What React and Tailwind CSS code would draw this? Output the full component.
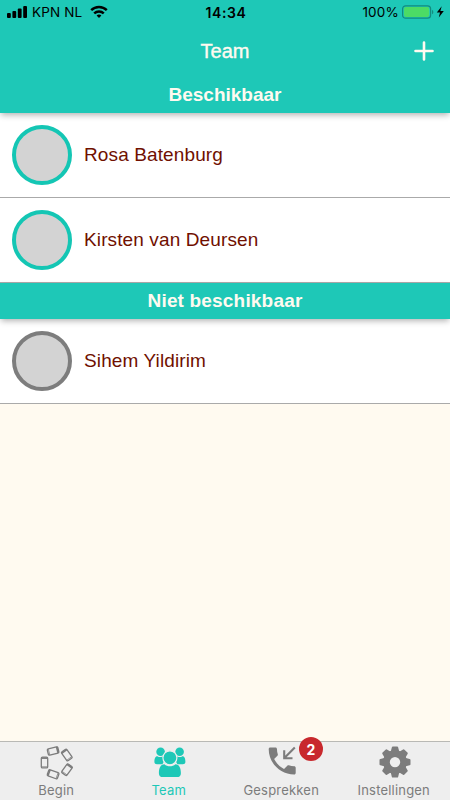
import { clsx } from 'clsx';

const available = ['Rosa Batenburg', 'Kirsten van Deursen'];
const unavailable = ['Sihem Yildirim'];

// x, y and rotation of every phone in the ring
const phones = [
  { x: 33.1, y: 9, angle: 76 },
  { x: 46.8, y: 13, angle: -36 },
  { x: 47, y: 27.7, angle: 36 },
  { x: 33.1, y: 32.3, angle: -70 },
  { x: 24.5, y: 20.5, angle: 0 },
];

function StatusBar() {
  return (
    <div className="flex h-6 items-center justify-between pl-[7px] pr-[5px] font-['Inter',sans-serif] text-[13.5px] text-black">
      <div className="flex flex-1 items-center">
        <svg width="21" height="14" viewBox="0 0 21 14">
          <rect x="0" y="8" width="3.8" height="5" rx="1" />
          <rect x="5.4" y="6" width="3.8" height="7" rx="1" />
          <rect x="10.8" y="3.5" width="3.8" height="9.5" rx="1" />
          <rect x="16.2" y="1" width="3.8" height="12" rx="1" />
        </svg>
        <span className="ml-[4px] w-[52px] whitespace-nowrap tracking-[0.15px]">KPN NL</span>
        <svg className="ml-[6px]" width="18" height="14" viewBox="0 0 18 14" fill="none" stroke="black" strokeWidth="2.4">
          <path d="M1.2 5.2C5.5 .9 12.5 .9 16.8 5.2" />
          <path d="M4.2 8.4C6.9 5.8 11.1 5.8 13.8 8.4" />
          <path d="M6.6 10.5C8 9.3 10 9.3 11.4 10.5L9 13Z" fill="black" stroke="none" />
        </svg>
      </div>
      <span className="text-[14px] font-semibold tracking-[0.6px]">14:34</span>
      <div className="flex flex-1 items-center justify-end">
        <span className="tracking-[0.2px]">100%</span>
        <svg className="ml-[3px]" width="43" height="14" viewBox="0 0 43 14">
          <rect x="0.6" y="0.8" width="28" height="12.4" rx="3" fill="none" stroke="#138b7e" strokeWidth="1.2" />
          <rect x="2" y="2.1" width="25.2" height="9.8" rx="1.8" fill="#4cdb65" />
          <path d="M30 4.7C31.8 5.5 31.8 8.5 30 9.3Z" fill="#138b7e" />
          <path d="M39.7 1.2L34.8 7.6H38L36.8 12.6L41.8 6.1H38.4Z" />
        </svg>
      </div>
    </div>
  );
}

function SectionHeader({ title, className }) {
  return (
    <h2
      className={clsx(
        'relative z-10 flex items-center justify-center bg-[#1ec8b7] text-[19px] font-bold text-[#fffaf0] shadow-[0_3px_6px_-1px_rgba(0,0,0,0.3)]',
        className
      )}
    >
      {title}
    </h2>
  );
}

function Member({ name, online }) {
  return (
    <li className="flex h-[85px] items-center gap-3 border-b border-[#aaa] bg-white px-3">
      <div className={clsx('size-[60px] rounded-full border-4 bg-[#d3d3d3]', online ? 'border-[#14c6b4]' : 'border-[#7d7d7d]')} />
      <span className="text-[19px] tracking-[0.12px] text-[#701000]">{name}</span>
    </li>
  );
}

function PhonesIcon() {
  return (
    <svg width="72" height="42" viewBox="0 0 72 42" fill="none" stroke="currentColor">
      {phones.map((p) => (
        <g key={p.angle} transform={`translate(${p.x} ${p.y}) rotate(${p.angle})`}>
          <rect x="-3.2" y="-5.4" width="6.4" height="10.8" rx="1.2" strokeWidth="1.3" />
          <path d="M-3.2 -4.4H3.2" strokeWidth="1.7" />
          <path d="M-3 4.2H3" strokeWidth="0.7" />
        </g>
      ))}
    </svg>
  );
}

function TeamIcon() {
  return (
    <svg width="72" height="42" viewBox="0 0 72 42" fill="currentColor">
      <g transform="translate(0.4 0.2)">
        <circle cx="27.2" cy="9.6" r="4.3" />
        <circle cx="46.2" cy="9.6" r="4.3" />
        <path d="M24 14C21.7 14 21 16.5 21 19.5C21 21.3 22 22 23.5 22H29L33 15L29 14.2C27.5 15.2 25.5 15 24 14Z" />
        <path d="M49 14C51.3 14 52 16.5 52 19.5C52 21.3 51 22 49.5 22H44L40 15L44 14.2C45.5 15.2 47.5 15 49 14Z" />
        <circle cx="36.5" cy="15.6" r="7" stroke="#eee" strokeWidth="1.2" />
        <path d="M31 22C34 24.8 39 24.8 42 22C46 22 47.5 26 47.5 31C47.5 33.5 46 34.9 43.5 34.9H29.5C27 34.9 25.5 33.5 25.5 31C25.5 26 27 22 31 22Z" />
      </g>
    </svg>
  );
}

function CallIcon() {
  return (
    <svg width="72" height="42" viewBox="0 0 72 42">
      <path
        transform="translate(19.2 0.9) scale(1.5)"
        fill="currentColor"
        d="M20 15.5c-1.25 0-2.45-.2-3.57-.57-.35-.11-.74-.03-1.02.24l-2.2 2.2c-2.83-1.44-5.15-3.75-6.59-6.58l2.2-2.21c.28-.27.36-.66.25-1.01C8.7 6.45 8.5 5.25 8.5 4c0-.55-.45-1-1-1H4c-.55 0-1 .45-1 1 0 9.39 7.61 17 17 17 .55 0 1-.45 1-1v-3.5c0-.55-.45-1-1-1z"
      />
      <path d="M49.8 5.6L39.4 16M39.2 8.2V16.2H47.5" fill="none" stroke="currentColor" strokeWidth="2.1" />
    </svg>
  );
}

function GearIcon() {
  return (
    <svg width="72" height="42" viewBox="0 0 72 42" fill="currentColor">
      <g transform="translate(37 20.1)">
        {[0, 45, 90, 135, 180, 225, 270, 315].map((a) => (
          <path key={a} transform={`rotate(${a})`} d="M-4.6 -9L-3.2 -14.6Q-3 -15.5 -2.1 -15.5H2.1Q3 -15.5 3.2 -14.6L4.6 -9Z" />
        ))}
        <path fillRule="evenodd" d="M-11.9 0A11.9 11.9 0 1 0 11.9 0A11.9 11.9 0 1 0 -11.9 0ZM-5.2 0A5.2 5.2 0 1 1 5.2 0A5.2 5.2 0 1 1 -5.2 0Z" />
      </g>
    </svg>
  );
}

const tabs = [
  { label: 'Begin', Icon: PhonesIcon },
  { label: 'Team', Icon: TeamIcon, active: true },
  { label: 'Gesprekken', Icon: CallIcon, badge: 2 },
  { label: 'Instellingen', Icon: GearIcon },
];

function TabBar() {
  return (
    <nav className="grid h-[59px] grid-cols-4 border-t border-[#b9b9b5] bg-[#eee] font-['Inter',sans-serif] text-[13px]">
      {tabs.map(({ label, Icon, active, badge }) => (
        <div key={label} className={clsx('relative flex flex-col items-center', active ? 'text-[#1ec8b7]' : 'text-[#7c7c7c]')}>
          <div className="h-[38px]">
            <Icon />
          </div>
          <span className="leading-[20px] tracking-[0.2px]">{label}</span>
          {badge && (
            <span className="absolute -top-[5px] left-[74px] flex size-6 items-center justify-center rounded-full bg-[#c8282d] text-[14px] font-bold text-white">
              {badge}
            </span>
          )}
        </div>
      ))}
    </nav>
  );
}

export default function App() {
  return (
    <div className="flex h-[800px] w-[450px] flex-col overflow-hidden bg-[#fffaf0] font-['Liberation_Sans',Arial,sans-serif]">
      <header className="relative z-20 bg-[#1ec8b7]">
        <StatusBar />
        <div className="grid h-[54px] grid-cols-[1fr_auto_1fr] items-center pr-4">
          <h1 className="col-start-2 pl-4 text-[20px] font-medium text-[#fffaf0] [-webkit-text-stroke:0.4px_#fffaf0]">Team</h1>
          <svg className="justify-self-end" width="20" height="20" viewBox="0 0 20 20" stroke="#fffaf0" strokeWidth="2.6" strokeLinecap="round">
            <path d="M10 1.5V18.5M1.5 10H18.5" />
          </svg>
        </div>
      </header>
      <main className="flex-1">
        <SectionHeader title="Beschikbaar" className="h-[35px]" />
        <ul>
          {available.map((name) => (
            <Member key={name} name={name} online />
          ))}
        </ul>
        <SectionHeader title="Niet beschikbaar" className="h-9 tracking-[0.18px]" />
        <ul>
          {unavailable.map((name) => (
            <Member key={name} name={name} />
          ))}
        </ul>
      </main>
      <TabBar />
    </div>
  );
}
